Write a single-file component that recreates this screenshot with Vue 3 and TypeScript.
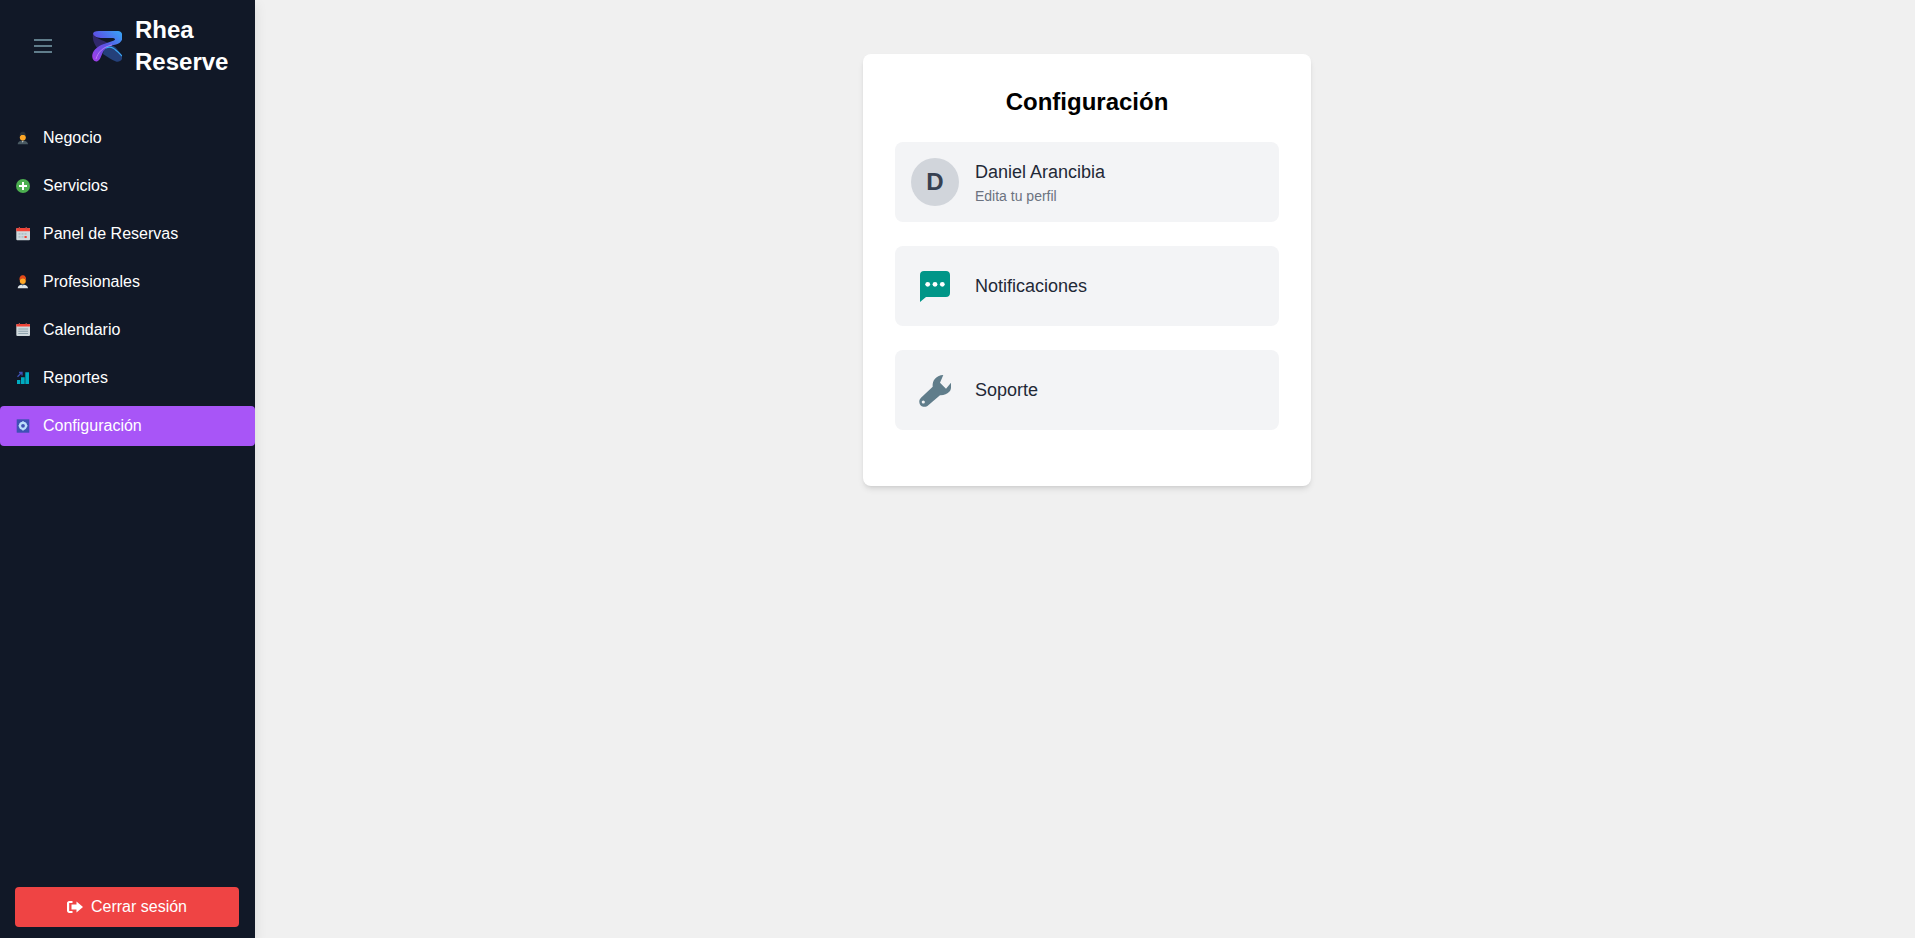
<template>
  <div class="layout">
    <aside class="sidebar">
      <div class="brand">
        <button class="menu-btn" title="Menu">
          <svg viewBox="0 0 18 14" width="18" height="14"><path d="M0 0H18V2H0ZM0 6H18V8H0ZM0 12H18V14H0Z" fill="#607d8b"/></svg>
        </button>
        <svg class="logo" viewBox="0 0 30 32" width="30" height="32">
          <defs>
            <linearGradient id="logoBand" x1="0" y1="1" x2="1" y2="0">
              <stop offset="0" stop-color="#a83be8"/>
              <stop offset="0.5" stop-color="#5a55e6"/>
              <stop offset="1" stop-color="#35a9f6"/>
            </linearGradient>
          </defs>
          <path d="M1 4C4 9 11 10 16 13L7 20C3 16 0 10 1 4Z" fill="#30286a"/>
          <path d="M12 19C18 14 22 15 25 19L30.5 26C31 30 27 32.5 24 31.5C19 30 16 27 11 24Z" fill="#24407a"/>
          <path d="M1 4C1 2 3 1 7 1H26C29 1 30.5 3 30.5 7C30.5 11 28 13.5 24 14.5C18 15.5 13 18 11 22C9 26 8.5 30 5 31.5C1.5 32 -0.5 28 0.5 24C1.5 20 6 16 12 14L22 10.5C24 9.5 23 8 20 8H12C8 8 3 8 1 4Z" fill="url(#logoBand)"/>
          <path d="M4 29C6 22 11 17 20 15" fill="none" stroke="#c58cf5" stroke-width="0.8"/>
          <path d="M14 18C20 15 24 20 30 26" fill="none" stroke="#38a8f5" stroke-width="1.2"/>
        </svg>
        <span class="brand-name">Rhea Reserve</span>
      </div>

      <nav class="nav">
        <a v-for="item in navItems" :key="item.label" class="nav-item" :class="{ active: item.active }">
          <svg class="nav-icon" viewBox="0 0 16 16" width="16" height="16">
            <template v-if="item.icon === 'business'">
              <path d="M2.7 14.3C2.7 12 4 11.2 6 10.7H9.4C11.4 11.2 13 12 13 14.3Z" fill="#4a5a63"/>
              <path d="M6.9 10.7H8.6L7.8 12.8Z" fill="#cfd8dc"/>
              <circle cx="7.8" cy="7.4" r="3" fill="#ffa726"/>
              <path d="M4.8 6.8C4.5 3 6 1.7 7.8 1.7S11 3 10.8 6.8C10.3 5.4 9.4 5 7.8 5S5.3 5.4 4.8 6.8Z" fill="#2b3238"/>
            </template>
            <template v-else-if="item.icon === 'plus'">
              <circle cx="8" cy="8" r="7" fill="#4caf50"/>
              <path d="M7 4H9V7H12V9H9V12H7V9H4V7H7Z" fill="#fff"/>
            </template>
            <template v-else-if="item.icon === 'panel'">
              <rect x="1.3" y="2" width="13.7" height="12.3" rx="1" fill="#cfd8dc"/>
              <path d="M1.3 3a1 1 0 0 1 1-1h11.7a1 1 0 0 1 1 1V5.2H1.3Z" fill="#f44336"/>
              <path d="M3.8 1H5V3.2H3.8ZM10.6 1H11.8V3.2H10.6Z" fill="#b0524d"/>
              <path d="M3.5 7H5.5V8.7H3.5ZM6.5 7H8.5V8.7H6.5ZM9.5 7H11.5V8.7H9.5ZM3.5 10H5.5V11.7H3.5ZM6.5 10H8.5V11.7H6.5Z" fill="#b0bec5"/>
              <path d="M9.5 10H11.7V12H9.5Z" fill="#f44336"/>
            </template>
            <template v-else-if="item.icon === 'doctor'">
              <path d="M2.7 14.3C2.7 12 4 11.2 6 10.7H9.4C11.4 11.2 13 12 13 14.3Z" fill="#dce4e8"/>
              <path d="M6.9 10.7H8.6L7.8 12.5Z" fill="#7d98a6"/>
              <circle cx="7.8" cy="7" r="3" fill="#ffa726"/>
              <path d="M4.5 6.6C4.2 2.6 6 1.3 7.8 1.3S11.4 2.6 11.1 6.6C10.5 5 9.4 4.6 7.8 4.6S5.1 5 4.5 6.6Z" fill="#e64a19"/>
            </template>
            <template v-else-if="item.icon === 'calendar'">
              <rect x="1.3" y="2" width="13.7" height="12" rx="1" fill="#cfd8dc"/>
              <path d="M1.3 3a1 1 0 0 1 1-1h11.7a1 1 0 0 1 1 1V4.6H1.3Z" fill="#f44336"/>
              <path d="M3.8 1H5V3H3.8ZM10.6 1H11.8V3H10.6Z" fill="#b0524d"/>
              <path d="M3.3 6.5H13V7.5H3.3ZM3.3 8.7H13V9.7H3.3ZM3.3 10.9H13V11.9H3.3Z" fill="#90a4ae"/>
            </template>
            <template v-else-if="item.icon === 'chart'">
              <path d="M2 10H5.3V14H2ZM6 7.3H9.7V14H6ZM10.3 2.3H14V14H10.3Z" fill="#00acc1"/>
              <path d="M2.5 6.7L6.4 2.9M4 2.5H7V5.5" fill="none" stroke="#3f51b5" stroke-width="1.3"/>
            </template>
            <template v-else>
              <rect x="1.7" y="1.3" width="12.6" height="13.4" fill="#3f51b5"/>
              <circle cx="8" cy="7.8" r="3" fill="none" stroke="#bbdefb" stroke-width="2.2"/>
              <path d="M7.2 3.2H8.8V4.6H7.2ZM7.2 11H8.8V12.4H7.2ZM3.6 7H5V8.6H3.6ZM11 7H12.4V8.6H11Z" fill="#bbdefb"/>
            </template>
          </svg>
          <span>{{ item.label }}</span>
        </a>
      </nav>

      <button class="logout">
        <svg viewBox="0 0 16 12" width="16" height="12"><path d="M5.5 0H2.2C1 0 0 1 0 2.2V9.8C0 11 1 12 2.2 12H5.5V10H2.2V2H5.5ZM9.5 0.6V3.4H4.5V8.6H9.5V11.4L16 6Z" fill="#fff"/></svg>
        <span>Cerrar sesión</span>
      </button>
    </aside>

    <main class="content">
      <section class="card">
        <h1 class="card-title">Configuración</h1>

        <div class="row">
          <div class="avatar">D</div>
          <div class="row-text">
            <div class="row-name">Daniel Arancibia</div>
            <div class="row-sub">Edita tu perfil</div>
          </div>
        </div>

        <div class="row">
          <div class="row-icon">
            <svg viewBox="0 0 30 31" width="30" height="31">
              <path d="M0 4C0 1.5 1.5 0 4 0H26C28.5 0 30 1.5 30 4V22C30 24.5 28.5 26 26 26H6L0 31Z" fill="#009688"/>
              <circle cx="7.7" cy="13.3" r="2.4" fill="#fff"/>
              <circle cx="15" cy="13.3" r="2.4" fill="#fff"/>
              <circle cx="22.3" cy="13.3" r="2.4" fill="#fff"/>
            </svg>
          </div>
          <div class="row-name">Notificaciones</div>
        </div>

        <div class="row">
          <div class="row-icon">
            <svg viewBox="0 0 32 33" width="32" height="33">
              <path fill-rule="evenodd" fill="#607d8b" d="M24.3 1L21 8.7L27 14.7L32 8.7C32.6 12 32 15 31 17C28 20.5 24.5 21.5 21 21.3L9.3 31.3C8 32.6 6 33 4.3 32.7C2 32.4 .4 30.4 .3 28C.2 26.4 .8 24.9 2 23.7L13.7 12.7C13.4 10 14 8 15 6C17.5 2.8 20.8 1 24.3 1ZM4.3 26.4A1.6 1.6 0 1 0 4.3 29.6A1.6 1.6 0 1 0 4.3 26.4Z"/>
            </svg>
          </div>
          <div class="row-name">Soporte</div>
        </div>
      </section>
    </main>
  </div>
</template>

<script setup lang="ts">
interface NavItem {
  label: string
  icon: string
  active?: boolean
}

const navItems: NavItem[] = [
  { label: 'Negocio', icon: 'business' },
  { label: 'Servicios', icon: 'plus' },
  { label: 'Panel de Reservas', icon: 'panel' },
  { label: 'Profesionales', icon: 'doctor' },
  { label: 'Calendario', icon: 'calendar' },
  { label: 'Reportes', icon: 'chart' },
  { label: 'Configuración', icon: 'settings', active: true },
]
</script>

<style>
html,
body {
  margin: 0;
  background: #f0f0f0;
}
</style>

<style scoped>
.layout {
  display: flex;
  height: 100vh;
  overflow: hidden;
  font-family: 'Liberation Sans', Arial, sans-serif;
  background: #f0f0f0;
}

.sidebar {
  width: 255px;
  flex-shrink: 0;
  display: flex;
  flex-direction: column;
  background: #111827;
  color: #fff;
  box-shadow: 0 4px 12px rgba(0, 0, 0, 0.1);
}

.brand {
  display: flex;
  align-items: center;
  height: 92px;
  padding-left: 34px;
  box-sizing: border-box;
}

.menu-btn {
  display: flex;
  padding: 0;
  border: 0;
  background: none;
  margin-right: 40px;
}

.logo {
  flex-shrink: 0;
  margin-right: 13px;
}

.brand-name {
  width: 100px;
  font-size: 24px;
  line-height: 32px;
  font-weight: 700;
}

.nav {
  flex: 1;
  display: flex;
  flex-direction: column;
  gap: 8px;
  margin-top: 26px;
}

.nav-item {
  display: flex;
  align-items: center;
  height: 40px;
  padding-left: 15px;
  gap: 12px;
  font-size: 16px;
  border-radius: 4px;
}

.nav-item.active {
  background: #a855f7;
}

.nav-icon {
  flex-shrink: 0;
}

.logout {
  display: flex;
  align-items: center;
  justify-content: center;
  gap: 8px;
  height: 40px;
  margin: 0 16px 11px 15px;
  padding: 0;
  border: 0;
  border-radius: 4px;
  background: #ef4444;
  color: #fff;
  font: inherit;
  font-size: 16px;
}

.content {
  flex: 1;
  display: flex;
  justify-content: center;
  align-items: flex-start;
  padding: 54px 0 0 4px;
}

.card {
  width: 448px;
  box-sizing: border-box;
  padding: 32px 32px 56px;
  background: #fff;
  border-radius: 8px;
  box-shadow: 0 4px 6px -1px rgba(0, 0, 0, 0.1), 0 2px 4px -2px rgba(0, 0, 0, 0.1);
}

.card-title {
  margin: 0 0 24px;
  font-size: 24px;
  line-height: 32px;
  font-weight: 700;
  text-align: center;
  color: #000;
}

.row {
  display: flex;
  align-items: center;
  height: 80px;
  padding: 0 16px;
  box-sizing: border-box;
  margin-bottom: 24px;
  background: #f3f4f6;
  border-radius: 8px;
}

.row:last-child {
  margin-bottom: 0;
}

.avatar {
  width: 48px;
  height: 48px;
  flex-shrink: 0;
  display: flex;
  align-items: center;
  justify-content: center;
  margin-right: 16px;
  border-radius: 50%;
  background: #d1d5db;
  color: #374151;
  font-size: 24px;
  font-weight: 700;
}

.row-icon {
  width: 48px;
  height: 48px;
  flex-shrink: 0;
  display: flex;
  align-items: center;
  justify-content: center;
  margin-right: 16px;
}

.row-name {
  font-size: 18px;
  line-height: 28px;
  color: #1f2937;
}

.row-sub {
  font-size: 14px;
  line-height: 20px;
  color: #6b7280;
}
</style>
